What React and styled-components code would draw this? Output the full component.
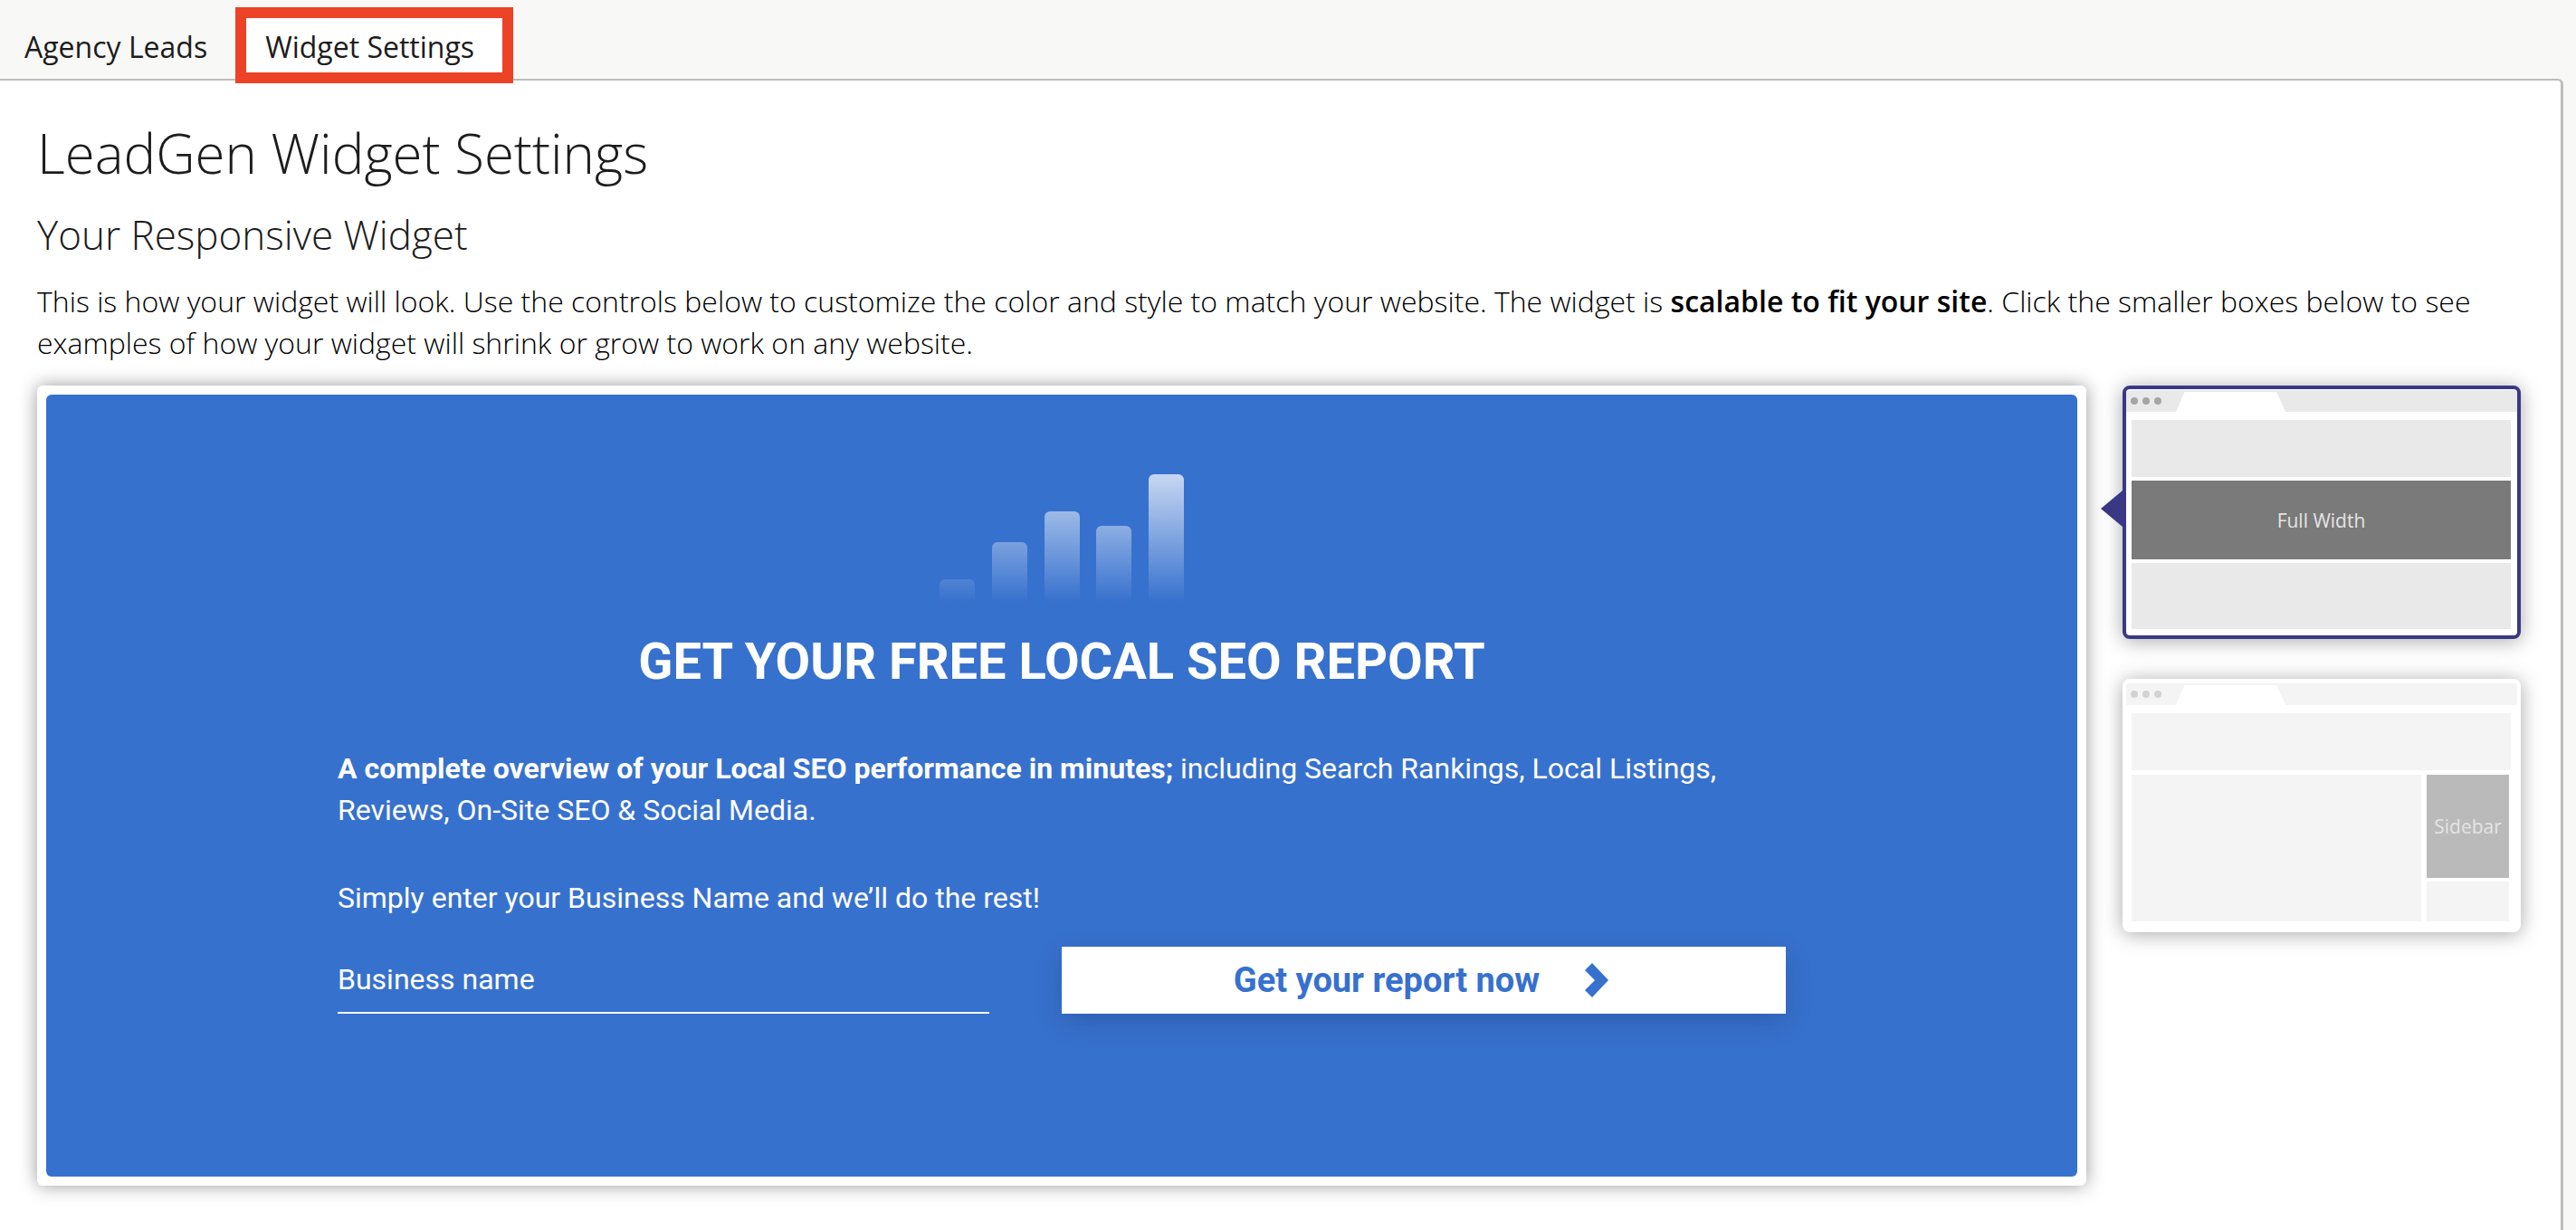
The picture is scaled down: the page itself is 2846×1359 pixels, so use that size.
import React from 'react';
import styled, { createGlobalStyle } from 'styled-components';

const GlobalStyle = createGlobalStyle`
  html, body {
    margin: 0;
    padding: 0;
    background: #f8f8f6;
  }
  * {
    box-sizing: border-box;
  }
`;

const Page = styled.div`
  display: flex;
  flex-direction: column;
  height: 100vh;
  overflow: hidden;
  font-family: 'Open Sans', sans-serif;
  color: #1c1c1c;
`;

const TabBar = styled.div`
  display: flex;
  flex: none;
  gap: 64px;
  height: 87px;
  padding: 29px 0 0 27px;
`;

const Tab = styled.div`
  position: relative;
  font-size: 32px;
  line-height: 46px;
  height: 46px;
`;

const TabLabel = styled.span`
  position: relative;
  z-index: 1;
`;

const Highlight = styled.div`
  position: absolute;
  top: -21px;
  bottom: -17px;
  left: -33px;
  right: -43px;
  border: 12px solid #ec4226;
  background: #fff;
`;

const Panel = styled.div`
  flex: 1;
  width: 2832px;
  padding: 40px 0 0 41px;
  background: #fff;
  border-top: 2px solid #bcbcbc;
  border-right: 3px solid #bcbcbc;
  border-top-right-radius: 6px;
`;

const Title = styled.h1`
  margin: 0;
  font-size: 60px;
  line-height: 80px;
  font-weight: 300;
`;

const Subtitle = styled.h2`
  margin: 20px 0 0;
  font-size: 44px;
  line-height: 60px;
  font-weight: 300;
`;

const Intro = styled.p`
  width: 2745px;
  margin: 21px 0 0;
  font-size: 32px;
  line-height: 46px;
  font-weight: 300;
  color: #000;

  strong {
    font-weight: 600;
  }
`;

const PreviewRow = styled.div`
  display: flex;
  align-items: flex-start;
  gap: 40px;
  margin-top: 24px;
`;

const WidgetFrame = styled.div`
  flex: none;
  width: 2264px;
  padding: 10px;
  background: #fff;
  border-radius: 6px;
  box-shadow: 0 0 20px rgba(0, 0, 0, 0.4);
`;

const Widget = styled.div`
  height: 864px;
  padding-top: 88px;
  background: #3771ce;
  border-radius: 6px;
  font-family: Roboto, sans-serif;
  color: #fff;
`;

const Chart = styled.svg`
  display: block;
  width: 270px;
  height: 141px;
  margin: 0 auto;
`;

const Headline = styled.h3`
  margin: 36px 0 0;
  font-size: 56px;
  line-height: 60px;
  font-weight: 700;
  text-align: center;
`;

const WidgetBody = styled.div`
  padding-left: 322px;
`;

const Copy = styled.p`
  width: 1600px;
  margin: ${p => p.$top}px 0 0;
  font-size: 32px;
  line-height: 46px;

  strong {
    font-weight: 700;
  }
`;

const LeadForm = styled.div`
  display: flex;
  gap: 80px;
  margin-top: 31px;
`;

const NameInput = styled.input`
  width: 720px;
  height: 74px;
  padding: 0;
  background: transparent;
  border: 0;
  border-bottom: 2px solid #fff;
  outline: 0;
  color: #fff;
  font: 400 32px Roboto, sans-serif;

  &::placeholder {
    color: #fff;
    opacity: 1;
  }
`;

const ReportButton = styled.button`
  display: flex;
  align-items: center;
  justify-content: center;
  gap: 50px;
  width: 800px;
  height: 74px;
  padding: 0 6px 0 0;
  background: #fff;
  border: 0;
  box-shadow: 0 10px 30px rgba(0, 0, 0, 0.15);
  color: #3771ce;
  font: 700 38px Roboto, sans-serif;
`;

const Chevron = styled.svg`
  width: 26px;
  height: 38px;
  fill: currentColor;
`;

const Thumbs = styled.div`
  display: flex;
  flex: none;
  flex-direction: column;
  gap: 44px;
  width: 440px;
`;

const Thumb = styled.div`
  position: relative;
  height: 280px;
  padding-top: 1px;
  background: #fff;
  border: 4px solid ${p => (p.$active ? '#3a3785' : '#fff')};
  border-radius: 8px;
  box-shadow: 0 2px 22px rgba(0, 0, 0, 0.35);

  ${p =>
    p.$active &&
    `
    &::before {
      content: '';
      position: absolute;
      top: 112px;
      left: -28px;
      width: 24px;
      height: 40px;
      background: #3a3785;
      clip-path: polygon(0 50%, 100% 0, 100% 100%);
    }
  `}
`;

const BrowserBar = styled.div`
  display: flex;
  align-items: flex-end;
  height: 24px;
  padding-left: 5px;
  background: ${p => (p.$active ? '#e9e9e9' : '#f4f4f4')};
  border-radius: 4px 4px 0 0;
`;

const Dots = styled.div`
  display: flex;
  gap: 5px;
  align-self: center;
  width: 50px;
`;

const Dot = styled.span`
  width: 8px;
  height: 8px;
  border-radius: 50%;
  background: ${p => (p.$active ? '#a5a5a5' : '#d2d2d2')};
`;

const BrowserTab = styled.div`
  width: 121px;
  height: 22px;
  background: #fff;
  clip-path: polygon(8% 0, 92% 0, 100% 100%, 0 100%);
`;

const ThumbBody = styled.div`
  display: flex;
  flex-direction: column;
  gap: ${p => p.$gap}px;
  padding: 9px 7px 0 6px;
`;

const Block = styled.div`
  display: flex;
  align-items: center;
  justify-content: center;
  height: ${p => p.$h}px;
  width: ${p => (p.$w ? `${p.$w}px` : 'auto')};
  background: ${p => p.$bg};
  color: #e4e4e4;
  font-size: 21px;
`;

const BlockRow = styled.div`
  display: flex;
  gap: 6px;
`;

const SideColumn = styled.div`
  display: flex;
  flex-direction: column;
  gap: 4px;
  width: 91px;
`;

const bars = [
  { x: 0, top: 116 },
  { x: 58, top: 75 },
  { x: 116, top: 41 },
  { x: 173, top: 57 },
  { x: 231, top: 0 }
];

const BarChart = () => (
  <Chart viewBox="0 0 270 141">
    <defs>
      <linearGradient id="barFade" gradientUnits="userSpaceOnUse" x1="0" y1="0" x2="0" y2="141">
        <stop offset="0" stopColor="#fff" stopOpacity="0.72" />
        <stop offset="1" stopColor="#fff" stopOpacity="0" />
      </linearGradient>
    </defs>
    {bars.map(b => (
      <path
        key={b.x}
        fill="url(#barFade)"
        d={`M${b.x} 141V${b.top + 6}a6 6 0 0 1 6-6h27a6 6 0 0 1 6 6V141z`}
      />
    ))}
  </Chart>
);

const Browser = ({ active, children, gap }) => (
  <Thumb $active={active}>
    <BrowserBar $active={active}>
      <Dots>
        <Dot $active={active} />
        <Dot $active={active} />
        <Dot $active={active} />
      </Dots>
      <BrowserTab />
    </BrowserBar>
    <ThumbBody $gap={gap}>{children}</ThumbBody>
  </Thumb>
);

export default function App() {
  return (
    <Page>
      <GlobalStyle />
      <TabBar>
        <Tab>
          <TabLabel>Agency Leads</TabLabel>
        </Tab>
        <Tab>
          <Highlight />
          <TabLabel>Widget Settings</TabLabel>
        </Tab>
      </TabBar>
      <Panel>
        <Title>LeadGen Widget Settings</Title>
        <Subtitle>Your Responsive Widget</Subtitle>
        <Intro>
          This is how your widget will look. Use the controls below to customize the color and style to match your
          website. The widget is <strong>scalable to fit your site</strong>. Click the smaller boxes below to see
          examples of how your widget will shrink or grow to work on any website.
        </Intro>
        <PreviewRow>
          <WidgetFrame>
            <Widget>
              <BarChart />
              <Headline>GET YOUR FREE LOCAL SEO REPORT</Headline>
              <WidgetBody>
                <Copy $top={65}>
                  <strong>A complete overview of your Local SEO performance in minutes;</strong> including Search
                  Rankings, Local Listings, Reviews, On-Site SEO &amp; Social Media.
                </Copy>
                <Copy $top={51}>Simply enter your Business Name and we’ll do the rest!</Copy>
                <LeadForm>
                  <NameInput placeholder="Business name" />
                  <ReportButton>
                    Get your report now
                    <Chevron viewBox="0 0 26 38">
                      <polygon points="8,0 26,19 8,38 0,30 11,19 0,8" />
                    </Chevron>
                  </ReportButton>
                </LeadForm>
              </WidgetBody>
            </Widget>
          </WidgetFrame>
          <Thumbs>
            <Browser active gap={4}>
              <Block $h={63} $bg="#e9e9e9" />
              <Block $h={87} $bg="#7a7a7a">Full Width</Block>
              <Block $h={73} $bg="#e9e9e9" />
            </Browser>
            <Browser gap={5}>
              <Block $h={63} $bg="#f4f4f4" />
              <BlockRow>
                <Block $h={162} $w={320} $bg="#f4f4f4" />
                <SideColumn>
                  <Block $h={114} $bg="#bababa">Sidebar</Block>
                  <Block $h={44} $bg="#f4f4f4" />
                </SideColumn>
              </BlockRow>
            </Browser>
          </Thumbs>
        </PreviewRow>
      </Panel>
    </Page>
  );
}
